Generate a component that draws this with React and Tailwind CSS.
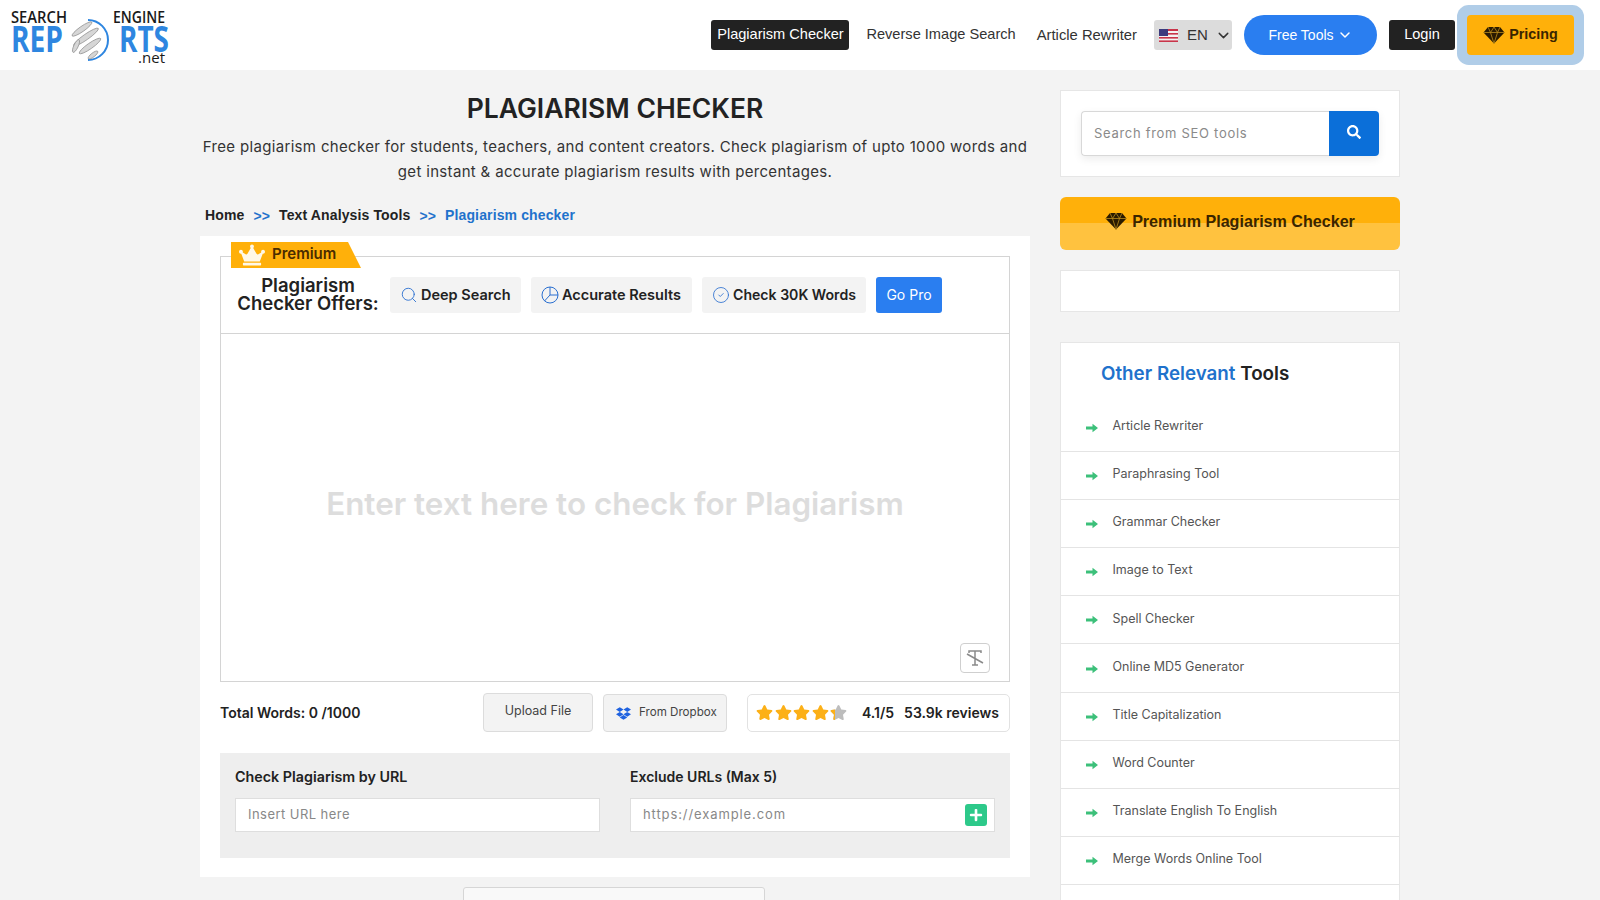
import { ChevronDown, Search, CircleCheck } from "lucide-react"
import { FaCrown, FaSearch, FaStar, FaDropbox, FaPlus } from "react-icons/fa"

const tools = [
    "Article Rewriter",
    "Paraphrasing Tool",
    "Grammar Checker",
    "Image to Text",
    "Spell Checker",
    "Online MD5 Generator",
    "Title Capitalization",
    "Word Counter",
    "Translate English To English",
    "Merge Words Online Tool",
]

function Logo() {
    return (
        <svg width="160" height="60" viewBox="0 0 160 60" className="block">
            <g fontFamily="'Open Sans', sans-serif" fontWeight="600" fill="#1a1a1a">
                <text x="1" y="18" fontSize="15.5" textLength="56" lengthAdjust="spacingAndGlyphs">SEARCH</text>
                <text x="103" y="18" fontSize="15.5" textLength="52" lengthAdjust="spacingAndGlyphs">ENGINE</text>
            </g>
            <text x="128" y="58" fontFamily="'Open Sans', sans-serif" fontSize="15" fill="#1a1a1a" textLength="27" lengthAdjust="spacingAndGlyphs">.net</text>
            <g fontFamily="'Open Sans', sans-serif" fontWeight="700" fill="#2e86e0">
                <text x="1" y="47" fontSize="35" textLength="52" lengthAdjust="spacingAndGlyphs">REP</text>
                <text x="109" y="47" fontSize="35" textLength="50" lengthAdjust="spacingAndGlyphs">RTS</text>
            </g>
            <path d="M78 15 A20 20 0 0 1 78 55" fill="none" stroke="#2e86e0" strokeWidth="2" />
            <g fill="#d6d6d6" stroke="#8f8f8f" strokeWidth="0.7">
                <ellipse cx="72" cy="24" rx="12" ry="2.6" transform="rotate(-35 72 24)" />
                <ellipse cx="76" cy="32" rx="15" ry="2.8" transform="rotate(-35 76 32)" />
                <ellipse cx="80" cy="41" rx="13" ry="2.8" transform="rotate(-35 80 41)" />
                <ellipse cx="83" cy="50" rx="6" ry="2" transform="rotate(-38 83 50)" />
                <ellipse cx="66" cy="41" rx="7" ry="2.2" transform="rotate(-65 66 41)" />
            </g>
        </svg>
    )
}

function UsFlag() {
    return (
        <svg width="19" height="13" viewBox="0 0 19 13" className="block">
            <rect width="19" height="13" fill="#f3f3f3" />
            <rect y="0" width="19" height="2" fill="#c9354a" />
            <rect y="4" width="19" height="1.6" fill="#c9354a" />
            <rect y="8" width="19" height="1.6" fill="#c9354a" />
            <rect y="11.4" width="19" height="1.6" fill="#c9354a" />
            <rect width="9" height="7" fill="#3c3b7e" />
        </svg>
    )
}

function Gem() {
    return (
        <svg width="22" height="18" viewBox="0 0 22 18" className="shrink-0">
            <path d="M5 1h12l4.5 5.5L11 17.5.5 6.5z" fill="#2a1a00" />
            <path d="M5 1l2.5 5.5L11 1l3.5 5.5L17 1M.5 6.5h21M7.5 6.5l3.5 11 3.5-11" fill="none" stroke="#b98a1a" strokeWidth="0.8" />
        </svg>
    )
}

function PieIcon() {
    return (
        <svg width="18" height="18" viewBox="0 0 18 18" fill="none" stroke="#2a6fd0" strokeWidth="1" className="shrink-0">
            <circle cx="9" cy="9" r="8" />
            <path d="M9 1v8h8M9 9l-5.5 6" />
        </svg>
    )
}

function GreenArrow() {
    return (
        <svg width="12" height="10" viewBox="0 0 12 10" fill="#3cc07a" className="shrink-0 mt-[3px]">
            <path d="M0 3.6h6.5V.8L12 5 6.5 9.2V6.4H0z" />
        </svg>
    )
}

function Offer({ icon, children, className }) {
    return (
        <div className={`h-9 flex items-center gap-[3px] bg-[#f3f3f3] rounded-[3px] text-[14.5px] font-semibold text-[#222] pl-[10px] pb-[1px] ${className}`}>
            {icon}
            {children}
        </div>
    )
}

export default function App() {
    return (
        <div className="h-screen overflow-hidden bg-[#f3f3f3] font-['Inter',sans-serif] text-[#222]">
            <header className="h-[70px] bg-white flex items-center justify-between pl-[10px] pr-[26px]">
                <Logo />
                <nav className="flex items-center font-['Liberation_Sans',sans-serif] text-[14.6px] text-[#333]">
                    <a className="h-[30px] w-[138px] flex items-center justify-center bg-[#222] text-white rounded-[3px]">Plagiarism Checker</a>
                    <a className="ml-[17px]">Reverse Image Search</a>
                    <a className="ml-[21px] text-[14.8px]">Article Rewriter</a>
                    <div className="ml-[17px] h-[30px] w-[78px] bg-[#dcdcdc] rounded-[3px] flex items-center pl-[5px] gap-[9px]">
                        <UsFlag />
                        <span className="text-[15px]">EN</span>
                        <ChevronDown size={17} strokeWidth={2} className="-ml-[2px]" />
                    </div>
                    <div className="ml-[12px] h-10 w-[133px] bg-[#2a7ef0] rounded-[20px] text-white text-sm flex items-center justify-center gap-[3px]">
                        Free Tools <ChevronDown size={16} strokeWidth={2.2} />
                    </div>
                    <a className="ml-[12px] h-[30px] w-[66px] bg-[#222] text-white rounded-[3px] flex items-center justify-center">Login</a>
                    <a className="ml-[12px] h-10 w-[107px] bg-[#ffb00a] rounded-[4px] shadow-[0_0_0_10px_#b0cde8] flex items-center justify-center gap-[4px] pb-[1px] text-[#3a2500] font-bold text-[14.3px]">
                        <Gem /> Pricing
                    </a>
                </nav>
            </header>

            <main className="w-[1200px] mx-auto flex gap-[30px]">
                <section className="w-[830px]">
                    <h1 className="mt-[21px] text-center text-[26.5px] leading-[34px] font-semibold text-[#222]">PLAGIARISM CHECKER</h1>
                    <p className="mt-[9px] text-center text-[15px] leading-[25px] tracking-[0.33px] text-[#333]">
                        Free plagiarism checker for students, teachers, and content creators. Check plagiarism of upto 1000 words and<br />
                        get instant &amp; accurate plagiarism results with percentages.
                    </p>
                    <div className="mt-[21px] ml-[5px] h-[20px] flex items-center font-['Liberation_Sans',sans-serif] font-bold text-sm tracking-[0.13px] text-[#222]">
                        Home
                        <span className="mx-[9px] mt-[2px] text-[#1f72cc]">&gt;&gt;</span>
                        Text Analysis Tools
                        <span className="mx-[9px] mt-[2px] text-[#1f72cc]">&gt;&gt;</span>
                        <span className="text-[#1f72cc]">Plagiarism checker</span>
                    </div>

                    <div className="relative mt-[11px] bg-white h-[641px] px-5 pt-[20px]">
                        <div className="absolute left-[31px] top-[6px] h-[26px] w-[130px] bg-[#ffb00a] [clip-path:polygon(0_0,90%_0,100%_100%,0_100%)] flex items-center pl-2 pb-[1px] gap-[7px] text-[15px] font-semibold text-[#4a2c00]">
                            <FaCrown size={26} className="text-[#fff8e8]" /> Premium
                        </div>
                        <div className="border border-[#d4d4d4] h-[426px] flex flex-col">
                            <div className="h-[77px] border-b border-[#d4d4d4] flex items-center shrink-0">
                                <div className="w-[169px] pl-[5px] pb-[3px] text-center text-[18.5px] leading-[18px] font-semibold">Plagiarism<br />Checker Offers:</div>
                                <Offer className="w-[131px]" icon={<Search size={18} strokeWidth={1.2} className="text-[#2a6fd0]" />}>Deep Search</Offer>
                                <Offer className="w-[161px] ml-[10px]" icon={<PieIcon />}>Accurate Results</Offer>
                                <Offer className="w-[164px] ml-[10px]" icon={<CircleCheck size={18} strokeWidth={1.1} className="text-[#2a6fd0]" />}>
                                    <span className="text-[14.1px]">Check 30K Words</span>
                                </Offer>
                                <a className="ml-[10px] h-9 w-[66px] bg-[#2a7ef0] text-white text-sm rounded-[3px] flex items-center justify-center">Go Pro</a>
                            </div>
                            <div className="relative flex-1 flex items-center justify-center pb-[6px] text-[31.4px] font-semibold text-[#dddddd]">
                                Enter text here to check for Plagiarism
                                <div className="absolute right-[19px] bottom-[8px] w-[30px] h-[30px] border border-[#cfcfcf] rounded-[4px] flex items-center justify-center">
                                    <svg width="20" height="20" viewBox="0 0 20 20" fill="none" stroke="#8a8a8a" strokeWidth="1.5">
                                        <path d="M4 5V3h12v2M10 3v14M7 17h6M2 6l16 9" />
                                    </svg>
                                </div>
                            </div>
                        </div>
                        <div className="mt-[11px] h-[39px] flex items-center">
                            <div className="text-sm font-semibold w-[263px]">Total Words: 0 /1000</div>
                            <a className="h-[39px] w-[110px] bg-[#f3f3f3] border border-[#dcdcdc] rounded-[4px] flex justify-center pt-[8px] text-[12.5px] text-[#444]">Upload File</a>
                            <a className="ml-[10px] h-[38px] w-[124px] bg-[#f3f3f3] border border-[#dcdcdc] rounded-[4px] flex items-center pl-[12px] pt-[1px] gap-[8px] text-[11.6px] text-[#444]">
                                <FaDropbox size={15} className="text-[#1f62e0]" /> From Dropbox
                            </a>
                            <div className="ml-[20px] h-[38px] w-[263px] border border-[#e2e2e2] rounded-[5px] flex items-center pl-[8px] text-sm font-semibold text-[#222]">
                                <FaStar size={17} className="text-[#fcb017] mr-[1.5px]" />
                                <FaStar size={17} className="text-[#fcb017] mr-[1.5px]" />
                                <FaStar size={17} className="text-[#fcb017] mr-[1.5px]" />
                                <FaStar size={17} className="text-[#fcb017] mr-[1.5px]" />
                                <span className="relative">
                                    <FaStar size={17} className="text-[#bdbdbd]" />
                                    <span className="absolute left-0 top-0 w-[5px] overflow-hidden">
                                        <FaStar size={17} className="text-[#fcb017] max-w-none" />
                                    </span>
                                </span>
                                <span className="ml-[15px]">4.1/5</span>
                                <span className="ml-[10px]">53.9k reviews</span>
                            </div>
                        </div>
                        <div className="mt-[21px] bg-[#eeeeee] h-[105px] px-[15px] pt-[14px] grid grid-cols-2 gap-x-[30px]">
                            <div>
                                <div className="text-[14.3px] font-semibold leading-[20px]">Check Plagiarism by URL</div>
                                <div className="mt-[11px] h-[34px] bg-white border border-[#dedede] flex items-center pl-[12px] pb-[1px] text-[13px] tracking-[0.45px] text-[#888]">Insert URL here</div>
                            </div>
                            <div>
                                <div className="text-sm font-semibold leading-[20px]">Exclude URLs (Max 5)</div>
                                <div className="mt-[11px] h-[34px] bg-white border border-[#dedede] flex items-center justify-between pl-[12px] pr-[7px] pb-[1px] text-[13px] tracking-[0.9px] text-[#888]">
                                    https://example.com
                                    <span className="w-[22px] h-[22px] bg-[#2dc98a] rounded-[3px] flex items-center justify-center text-white">
                                        <FaPlus size={14} />
                                    </span>
                                </div>
                            </div>
                        </div>
                    </div>
                    <div className="mt-[10px] ml-[263px] w-[302px] h-[80px] bg-[#f9f9f9] border border-[#d6d6d6] rounded-[3px]"></div>
                </section>

                <aside className="w-[340px] pt-[20px]">
                    <div className="h-[87px] bg-white border border-[#e6e6e6] flex items-center px-[20px] pb-[1px]">
                        <div className="w-full h-[45px] flex rounded-[4px] shadow-[0_3px_8px_rgba(0,0,0,0.08)]">
                            <div className="flex-1 border border-[#d8d8d8] border-r-0 rounded-l-[4px] flex items-center pl-[12px] pt-[2px] text-[13px] tracking-[0.7px] text-[#8a8a8a]">Search from SEO tools</div>
                            <div className="w-[50px] bg-[#0b6fd9] rounded-r-[4px] flex items-center justify-center pb-[2px] text-white">
                                <FaSearch size={14} />
                            </div>
                        </div>
                    </div>
                    <a className="mt-[20px] h-[53px] rounded-[6px] bg-[linear-gradient(#ffb00a_50%,#ffc23f_50%)] flex items-center justify-center gap-[5px] pb-[5px] font-['Liberation_Sans',sans-serif] font-bold text-[16.1px] text-[#3a2500]">
                        <Gem /> Premium Plagiarism Checker
                    </a>
                    <div className="mt-[20px] h-[42px] bg-white border border-[#e6e6e6]"></div>
                    <div className="mt-[30px] bg-white border border-[#e6e6e6]">
                        <h3 className="pl-[40px] pt-[18px] h-[61px] text-[18.8px] leading-[26px] font-semibold">
                            <span className="text-[#1f72cc]">Other Relevant</span> Tools
                        </h3>
                        {tools.map((name) => (
                            <div key={name} className="h-[48.1px] border-b border-[#e4e4e4] flex items-center pl-[25px] pb-[2px] gap-[14.5px] text-[12.5px] text-[#555]">
                                <GreenArrow />
                                {name}
                            </div>
                        ))}
                        <div className="h-[48px]"></div>
                    </div>
                </aside>
            </main>
        </div>
    )
}
